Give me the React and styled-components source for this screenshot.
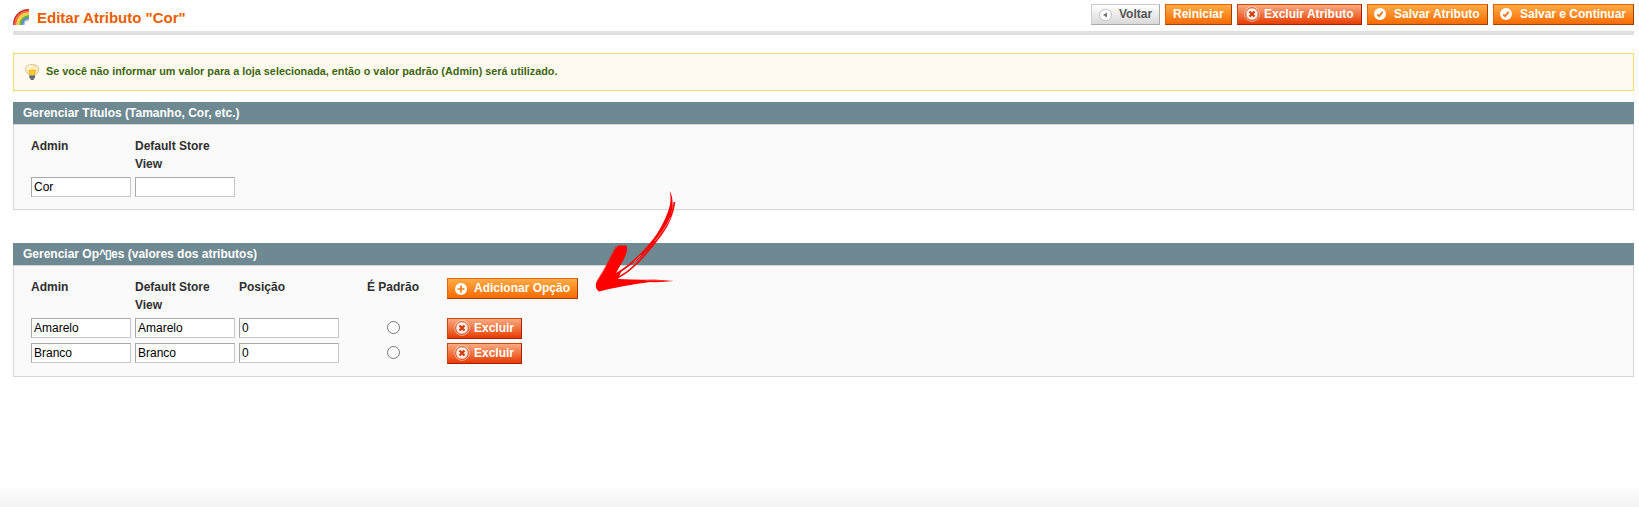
import React from "react";
import styled, { createGlobalStyle, css } from "styled-components";

const Global = createGlobalStyle`
  html, body { margin: 0; padding: 0; }
  body {
    background: #fff;
    color: #2f2f2f;
    font: 12px/18px Arial, "Liberation Sans", sans-serif;
  }
`;

const Page = styled.div`
  position: relative;
  box-sizing: border-box;
  height: 507px;
  padding: 4px 5px 0 13px;
  background: linear-gradient(#fff, #f3f3f3) bottom / 100% 24px no-repeat, #fff;
`;

const Header = styled.header`
  display: flex;
  justify-content: space-between;
  align-items: flex-start;
  height: 27px;
  border-bottom: 4px solid #dfdfdf;
`;

const Title = styled.h3`
  display: flex;
  gap: 8px;
  margin: 5px 0 0;
  color: #eb5e00;
  font-size: 15px;
  line-height: 17px;
`;

const Actions = styled.div`
  display: flex;
  gap: 5px;
`;

const tones = {
  save: css`
    border-color: #ed6502 #a04300 #a04300 #ed6502;
    background: linear-gradient(#ffac47, #f76a00);
    color: #fff;
  `,
  remove: css`
    border-color: #d24403 #a92000 #a92000 #d24403;
    background: linear-gradient(#fbaa82, #e83c00);
    color: #fff;
  `,
  back: css`
    border-color: #ccc #aaa #aaa #ccc;
    background: linear-gradient(#fff, #d9d9d9);
    color: #555;
  `,
};

const Button = styled.button`
  display: inline-flex;
  align-items: center;
  box-sizing: border-box;
  width: ${(p) => p.$width}px;
  height: 21px;
  margin: 0;
  padding: 0 0 1px ${(p) => p.$pad ?? 6}px;
  border: 1px solid;
  font: bold 12px/18px Arial, "Liberation Sans", sans-serif;
  white-space: nowrap;
  ${(p) => tones[p.$tone]}

  svg {
    flex: none;
    margin-right: ${(p) => p.$gap ?? 7}px;
    transform: translateY(${(p) => p.$drop ?? 0}px);
  }
`;

const Notice = styled.div`
  display: flex;
  box-sizing: border-box;
  height: 38px;
  margin: 18px 0 11px;
  padding: 10px;
  border: 1px solid #ffd967;
  background: #fffbf0;
  color: #3d6611;
  font-size: 10.83px;
  font-weight: bold;
  line-height: 15px;

  svg { flex: none; margin-right: 6px; }
`;

const Section = styled.section`
  margin-bottom: 33px;
`;

const SectionHead = styled.h4`
  height: 22px;
  margin: 0;
  padding-left: 10px;
  background: #6f8992;
  color: #fff;
  font-size: 12px;
  line-height: 22px;
`;

const Garbled = styled.span`
  letter-spacing: -1px;
`;

const Panel = styled.div`
  padding: 12px 17px ${(p) => p.$bottom}px;
  border: 1px solid #d6d6d6;
  background: #fafafa;
`;

const Grid = styled.div`
  display: grid;
  grid-template-columns: 100px 100px 100px 100px auto;
  column-gap: 4px;
  justify-content: start;
`;

const HeadCell = styled.div`
  height: 40px;
  font-weight: bold;
  text-align: ${(p) => p.$align ?? "left"};
`;

const Cell = styled.div`
  height: 25px;
`;

const TextInput = styled.input`
  display: block;
  box-sizing: border-box;
  width: 100px;
  height: 20px;
  margin: 0;
  padding: 0 2px 1px;
  border: 1px solid;
  border-color: #aaa #c8c8c8 #c8c8c8 #aaa;
  background: #fff;
  color: #000;
  font: 12px Arial, "Liberation Sans", sans-serif;
`;

const Radio = styled.input.attrs({ type: "radio" })`
  display: block;
  width: 13px;
  height: 13px;
  margin: 3px auto 0;
`;

const ArrowMark = styled.svg`
  position: absolute;
  left: 590px;
  top: 185px;
  pointer-events: none;
`;

const RainbowIcon = () => (
  <svg width="16" height="16" viewBox="0 0 16 16" fill="none">
    <path d="M.8 16C.8 7 7 .8 16 .8" stroke="#cf2f2b" strokeWidth="1.800" />
    <path d="M2.600 16C2.600 8 8 2.600 16 2.600" stroke="#ef6f3a" strokeWidth="2" />
    <path d="M4.800 16C4.800 9.500 9.500 4.800 16 4.800" stroke="#fad03c" strokeWidth="2.600" />
    <path d="M7.400 16C7.400 11 11 7.400 16 7.400" stroke="#6fb43c" strokeWidth="2.600" />
    <path d="M9.600 16C9.600 12 12 9.600 16 9.600" stroke="#5f86d2" strokeWidth="2" />
    <path d="M11.200 16C11.200 13 13 11.200 16 11.200" stroke="#b3c3ec" strokeWidth="1.300" />
  </svg>
);

const BulbIcon = () => (
  <svg width="16" height="16" viewBox="0 0 16 16">
    <defs>
      <radialGradient id="glass" cx=".5" cy=".65" r=".65">
        <stop offset="0" stopColor="#ffe36b" />
        <stop offset=".55" stopColor="#fff0b8" />
        <stop offset="1" stopColor="#f7e3c4" />
      </radialGradient>
    </defs>
    <path d="M5 11.200C4.600 9.500 1.500 8.700 1.500 5.400 1.500 2.400 4.500.6 8.200.6s6.500 1.800 6.500 4.800c0 3.300-3 4.100-3.400 5.800z" fill="url(#glass)" stroke="#dcb684" strokeWidth=".9" />
    <path d="M5.200 6l1.500.8L8.200 6l1.500.8L11.200 6l-.7 5.200H5.900z" fill="#fcd02e" stroke="#e8a022" strokeWidth=".8" />
    <path d="M5.300 11.200h5.800v2.600L9.700 15.600h-3L5.300 13.800z" fill="#8d929b" />
    <path d="M5.500 13h5.400M6.800 15.200h2.800" stroke="#3a3a40" />
    <path d="M3.200 5C3.700 3 5.200 2 7.500 1.900" fill="none" stroke="#fff" strokeWidth="1.300" />
  </svg>
);

const DeleteIcon = () => (
  <svg width="16" height="16" viewBox="0 0 16 16" fill="none">
    <circle cx="8" cy="8" r="7.300" stroke="#fff" strokeOpacity=".65" strokeWidth=".9" />
    <circle cx="8" cy="8" r="6.300" fill="#fff" fillOpacity=".88" stroke="#d2491a" strokeWidth=".9" />
    <path d="M5.500 5.500l5 5M10.500 5.500l-5 5" stroke="#d23c08" strokeWidth="2.300" />
  </svg>
);

const CheckIcon = () => (
  <svg width="12" height="12" viewBox="0 0 12 12" fill="none">
    <circle cx="6" cy="6" r="6" fill="#fff" />
    <path d="M3.300 6.300l1.900 1.800 3.500-4.300" stroke="#ef7414" strokeWidth="1.800" />
  </svg>
);

const AddIcon = () => (
  <svg width="12" height="12" viewBox="0 0 12 12" fill="none">
    <circle cx="6" cy="6" r="6" fill="#fff" />
    <path d="M6 2.500v7M2.500 6h7" stroke="#f17b1c" strokeWidth="1.700" />
  </svg>
);

const BackIcon = () => (
  <svg width="13" height="13" viewBox="0 0 13 13">
    <circle cx="6.500" cy="6.500" r="5.900" fill="#fff" stroke="#c0c0c0" />
    <path d="M4 6.500l4-2.500v5z" fill="#777" />
  </svg>
);

const Arrow = () => (
  <ArrowMark width="90" height="110" viewBox="590 185 90 110" fill="none">
    <path
      fill="#f00"
      d="M669.500 191Q673.500 197 672.500 209Q669 225 657 239Q644 256 632 264L621 272L618 279Q639 280 654 279.500L674 281Q660 282.500 650 282Q620 286 599 291.500Q595 289 596 283Q604 271 610 259Q614 250 618 245.500L626.500 245.500Q628.500 250 624 259L616 273Q628 266 640 254Q654 240 661 227Q671 208 670.500 199Q670.500 194 669.500 191Z"
    />
    <path d="M674.500 202Q672.500 219 661.500 234Q647 254 634 266Q627 273 617 278" stroke="#f00" strokeWidth="1.700" />
    <path d="M671 217Q665 229 655 241M641 255L634 262M645 280L662 280" stroke="#fff" strokeOpacity=".6" strokeWidth=".7" />
    <path d="M616 246Q605 269 597 281" stroke="#f00" strokeOpacity=".45" strokeWidth="1.200" />
  </ArrowMark>
);

const options = ["Amarelo", "Branco"];

export default function App() {
  return (
    <Page>
      <Global />
      <Header>
        <Title><RainbowIcon />Editar Atributo "Cor"</Title>
        <Actions>
          <Button $tone="back" $width={69} $pad={7} $drop={0.5}><BackIcon />Voltar</Button>
          <Button $tone="save" $width={67} $pad={7}>Reiniciar</Button>
          <Button $tone="remove" $width={125} $gap={4}><DeleteIcon />Excluir Atributo</Button>
          <Button $tone="save" $width={121} $gap={8}><CheckIcon />Salvar Atributo</Button>
          <Button $tone="save" $width={141} $gap={8}><CheckIcon />Salvar e Continuar</Button>
        </Actions>
      </Header>
      <Notice>
        <BulbIcon />
        Se você não informar um valor para a loja selecionada, então o valor padrão (Admin) será utilizado.
      </Notice>
      <Section>
        <SectionHead>Gerenciar Títulos (Tamanho, Cor, etc.)</SectionHead>
        <Panel $bottom={12}>
          <Grid>
            <HeadCell>Admin</HeadCell>
            <HeadCell>Default Store View</HeadCell>
            <HeadCell /><HeadCell /><HeadCell />
            <TextInput defaultValue="Cor" />
            <TextInput />
          </Grid>
        </Panel>
      </Section>
      <Section>
        <SectionHead>Gerenciar Op<Garbled>^▯</Garbled>es (valores dos atributos)</SectionHead>
        <Panel $bottom={8}>
          <Grid>
            <HeadCell>Admin</HeadCell>
            <HeadCell>Default Store View</HeadCell>
            <HeadCell>Posição</HeadCell>
            <HeadCell $align="center">É Padrão</HeadCell>
            <div>
              <Button $tone="save" $width={131} $pad={7} $drop={1}><AddIcon />Adicionar Opção</Button>
            </div>
            {options.map((name) => (
              <React.Fragment key={name}>
                <Cell><TextInput defaultValue={name} /></Cell>
                <Cell><TextInput defaultValue={name} /></Cell>
                <Cell><TextInput defaultValue="0" /></Cell>
                <Cell><Radio name="default" /></Cell>
                <Cell>
                  <Button $tone="remove" $width={75} $gap={4}><DeleteIcon />Excluir</Button>
                </Cell>
              </React.Fragment>
            ))}
          </Grid>
        </Panel>
      </Section>
      <Arrow />
    </Page>
  );
}
